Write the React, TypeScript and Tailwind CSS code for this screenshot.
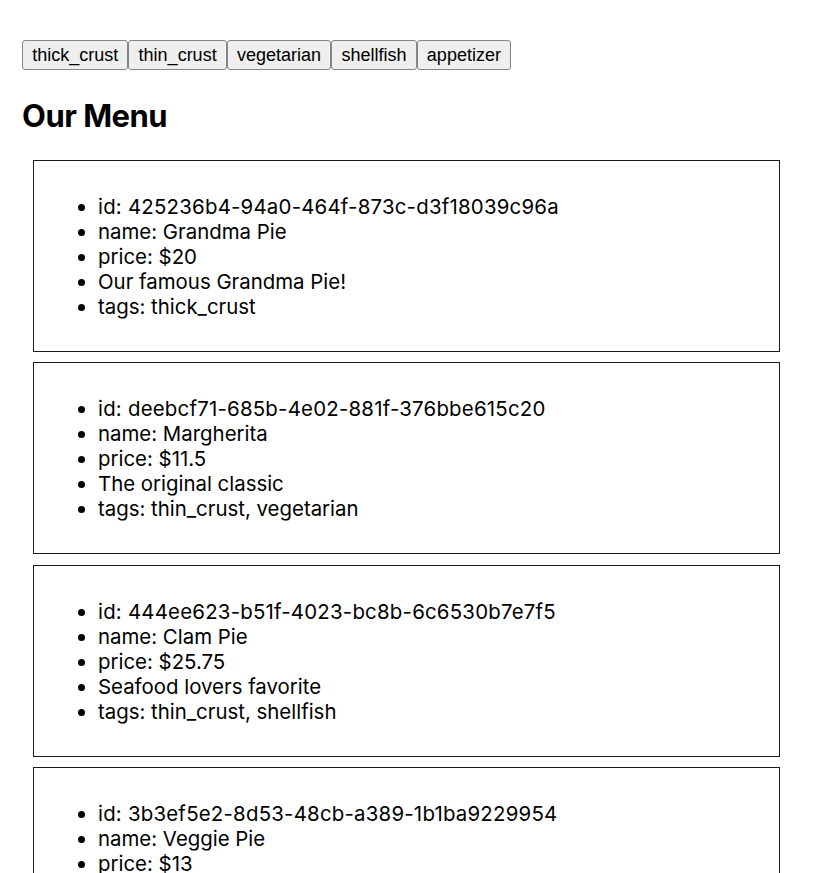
const tags = ["thick_crust", "thin_crust", "vegetarian", "shellfish", "appetizer"];

const menu = [
  {
    id: "425236b4-94a0-464f-873c-d3f18039c96a",
    name: "Grandma Pie",
    price: "20",
    description: "Our famous Grandma Pie!",
    tags: ["thick_crust"],
  },
  {
    id: "deebcf71-685b-4e02-881f-376bbe615c20",
    name: "Margherita",
    price: "11.5",
    description: "The original classic",
    tags: ["thin_crust", "vegetarian"],
  },
  {
    id: "444ee623-b51f-4023-bc8b-6c6530b7e7f5",
    name: "Clam Pie",
    price: "25.75",
    description: "Seafood lovers favorite",
    tags: ["thin_crust", "shellfish"],
  },
  {
    id: "3b3ef5e2-8d53-48cb-a389-1b1ba9229954",
    name: "Veggie Pie",
    price: "13",
    description: "Loaded with fresh vegetables",
    tags: ["thin_crust", "vegetarian"],
  },
];

export default function App() {
  return (
    <div className="min-h-screen bg-white px-[22px] pt-[40px] text-black [font-family:Inter,'Noto_Sans',sans-serif]">
      <div className="flex">
        {tags.map((tag) => (
          <button
            key={tag}
            className="h-[30px] rounded-[3px] border border-[#858585] bg-[#efefef] px-[9.2px] text-[18px] leading-[20px] text-black [font-family:'Liberation_Sans',Arial,sans-serif]"
          >
            {tag}
          </button>
        ))}
      </div>
      <h1 className="mt-[28px] text-[31px] font-bold leading-[36px] tracking-[-0.5px]">Our Menu</h1>
      <div className="mt-[26px] mr-[22px] ml-[11px] flex flex-col gap-[10.4px]">
        {menu.map((item) => (
          <div key={item.id} className="border border-[#1a1a1a] px-[24px] pt-[13px] pb-[12px]">
            <ul className="my-[20px] list-disc pl-[40px] text-[20.4px] leading-[25px]">
              <li>
                <span className="tracking-[0.22px]">id: {item.id}</span>
              </li>
              <li>name: {item.name}</li>
              <li>price: ${item.price}</li>
              <li>{item.description}</li>
              <li>tags: {item.tags.join(", ")}</li>
            </ul>
          </div>
        ))}
      </div>
    </div>
  );
}
